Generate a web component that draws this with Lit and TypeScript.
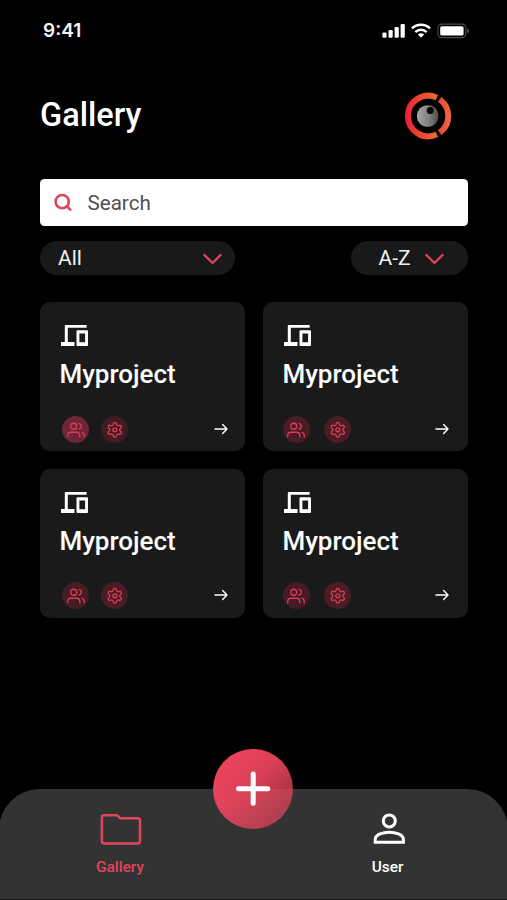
import { LitElement, html, svg, css } from "lit";
import { customElement, property } from "lit/decorators.js";
import { styleMap } from "lit/directives/style-map.js";

interface Project {
  name: string;
  teamX: number;
  arrowEnd: number;
  badgeY: number;
  teamColor: string;
  gearColor: string;
}

const projects: Project[] = [
  { name: "Myproject", teamX: 22, arrowEnd: 16.8, badgeY: 114, teamColor: "#6c2635", gearColor: "#421c24" },
  { name: "Myproject", teamX: 19.6, arrowEnd: 19.5, badgeY: 114, teamColor: "#4a1c26", gearColor: "#4a1c26" },
  { name: "Myproject", teamX: 22, arrowEnd: 16.8, badgeY: 113, teamColor: "#451b25", gearColor: "#4a1c26" },
  { name: "Myproject", teamX: 19.6, arrowEnd: 19.5, badgeY: 113, teamColor: "#451b25", gearColor: "#4a1c26" },
];

const usersIcon = svg`
  <path d="M17 21v-2a4 4 0 0 0-4-4H5a4 4 0 0 0-4 4v2"/>
  <circle cx="9" cy="7" r="4"/>
  <path d="M23 21v-2a4 4 0 0 0-3-3.87M16 3.13a4 4 0 0 1 0 7.75"/>`;

const gearIcon = svg`
  <path d="M12.22 2h-.44a2 2 0 0 0-2 2v.18a2 2 0 0 1-1 1.73l-.43.25a2 2 0 0 1-2 0l-.15-.08a2 2 0 0 0-2.73.73l-.22.38a2 2 0 0 0 .73 2.73l.15.1a2 2 0 0 1 1 1.72v.51a2 2 0 0 1-1 1.74l-.15.09a2 2 0 0 0-.73 2.73l.22.38a2 2 0 0 0 2.73.73l.15-.08a2 2 0 0 1 2 0l.43.25a2 2 0 0 1 1 1.73V20a2 2 0 0 0 2 2h.44a2 2 0 0 0 2-2v-.18a2 2 0 0 1 1-1.73l.43-.25a2 2 0 0 1 2 0l.15.08a2 2 0 0 0 2.73-.73l.22-.39a2 2 0 0 0-.73-2.73l-.15-.08a2 2 0 0 1-1-1.74v-.5a2 2 0 0 1 1-1.74l.15-.09a2 2 0 0 0 .73-2.73l-.22-.38a2 2 0 0 0-2.73-.73l-.15.08a2 2 0 0 1-2 0l-.43-.25a2 2 0 0 1-1-1.73V4a2 2 0 0 0-2-2z"/>
  <circle cx="12" cy="12" r="2.7"/>`;

@customElement("project-card")
class ProjectCard extends LitElement {
  @property({ attribute: false }) project!: Project;

  static styles = css`
    :host {
      display: flex;
      flex-direction: column;
      box-sizing: border-box;
      height: 149px;
      border-radius: 10px;
      background: #1a1a1a;
      padding-top: 23px;
    }
    .devices {
      display: block;
      width: 27px;
      height: 21px;
      margin-left: 21.4px;
    }
    .name {
      font-size: 26px;
      line-height: 30px;
      font-weight: 500;
      color: #fff;
      margin: 12.5px 0 0 19.4px;
    }
    .foot {
      display: flex;
      align-items: center;
      height: 27px;
    }
    .badges {
      display: flex;
      justify-content: space-between;
    }
    .badge {
      display: flex;
      align-items: center;
      justify-content: center;
      width: 27.4px;
      height: 27.4px;
      border-radius: 50%;
    }
    .badge svg {
      display: block;
      fill: none;
      stroke: #dc3d56;
      stroke-linecap: round;
      stroke-linejoin: round;
    }
    .arrow {
      margin: 0 0 1px auto;
      display: block;
    }
  `;

  render() {
    const p = this.project;
    return html`
      <svg class="devices" viewBox="0 0 27 21">
        <path fill="#fff" d="M3.8 1q0-1 1-1H25.6V2.8H6.8V17H13.5V21H0V17H3.8Z"/>
        <path fill="#fff" fill-rule="evenodd" d="M16.5 5.2H26Q27 5.2 27 6.2V20Q27 21 26 21H16.5Q15.5 21 15.5 20V6.2Q15.5 5.2 16.5 5.2ZM18.4 8.6V17.3H24.1V8.6Z"/>
      </svg>
      <div class="name">${p.name}</div>
      <div class="foot" style=${styleMap({
        "margin-top": `${p.badgeY - 86.5}px`,
        "padding-left": `${p.teamX}px`,
        "padding-right": `${p.arrowEnd}px`,
      })}>
        <div class="badges" style=${styleMap({ width: `${88.3 - p.teamX}px` })}>
          <span class="badge" style=${styleMap({ background: p.teamColor })}>
            <svg width="18" height="18" viewBox="0 0 24 24" stroke-width="1.7">${usersIcon}</svg>
          </span>
          <span class="badge" style=${styleMap({ background: p.gearColor })}>
            <svg width="17.6" height="17.6" viewBox="0 0 24 24" stroke-width="1.8">${gearIcon}</svg>
          </span>
        </div>
        <svg class="arrow" width="14" height="12" viewBox="0 0 14 12" fill="none" stroke="#fff" stroke-width="1.4" stroke-linecap="round" stroke-linejoin="round">
          <path d="M1 6H13M8.6 1.5 13 6 8.6 10.5"/>
        </svg>
      </div>
    `;
  }
}

@customElement("app-root")
class AppRoot extends LitElement {
  static styles = css`
    :host {
      display: flex;
      flex-direction: column;
      width: 507px;
      height: 900px;
      box-sizing: border-box;
      overflow: hidden;
      background: #000;
      color: #fff;
      font-family: Roboto, "Liberation Sans", sans-serif;
    }
    svg { display: block; }
    .status {
      display: flex;
      justify-content: space-between;
      align-items: center;
      height: 61px;
      padding: 0 38px 0 43px;
    }
    .time {
      font-family: Inter, sans-serif;
      font-weight: 600;
      font-size: 19px;
      line-height: 24px;
      color: #f4f4f4;
    }
    .head {
      display: flex;
      justify-content: space-between;
      align-items: center;
      height: 110px;
      padding: 0 55px 0 40px;
    }
    h1 {
      margin: 0;
      font-size: 32.5px;
      line-height: 40px;
      font-weight: 500;
      padding-bottom: 2px;
    }
    .content {
      display: flex;
      flex-direction: column;
      padding: 7.5px 39px 0 40px;
    }
    .search {
      display: flex;
      align-items: center;
      height: 47px;
      border-radius: 4.5px;
      background: #fff;
      color: #505050;
      font-size: 20.6px;
      padding-left: 13px;
    }
    .search span {
      margin-left: 14.5px;
      padding-top: 1px;
    }
    .filters {
      display: flex;
      justify-content: space-between;
      margin-top: 15.5px;
    }
    .pill {
      display: flex;
      align-items: center;
      justify-content: space-between;
      box-sizing: border-box;
      height: 34px;
      border-radius: 17px;
      background: #191919;
      font-size: 21px;
      color: #f2f2f2;
    }
    .pill svg { margin-top: 2px; }
    .all { width: 195px; padding: 0 12px 0 18px; }
    .sort { width: 117px; padding: 0 23px 0 27.5px; }
    .grid {
      display: grid;
      grid-template-columns: 205px 205px;
      justify-content: space-between;
      row-gap: 18px;
      margin-top: 27px;
    }
    .nav {
      position: relative;
      margin: auto -1px 0;
      height: 110px;
      border-radius: 41px 41px 0 0;
      background: #333;
      border-bottom: 1px solid #191316;
      display: flex;
      justify-content: space-between;
      padding: 0 70.5px 0 71px;
      flex: none;
    }
    .tab {
      display: flex;
      flex-direction: column;
      align-items: center;
      width: 100px;
      padding-top: 24px;
      font-size: 15.4px;
      font-weight: 500;
      line-height: 20px;
      gap: 12px;
    }
    .active { color: #e2445c; }
    .folder { margin-left: 2px; }
    .person { margin-left: 3px; }
    .fab {
      position: absolute;
      left: 214.3px;
      top: -40.5px;
      width: 80px;
      height: 80px;
      border-radius: 50%;
      background: linear-gradient(135deg, #ee445e 12%, rgba(232, 68, 93, 0.94) 45%, rgba(226, 68, 92, 0.7) 85%);
    }
  `;

  private chevron() {
    return html`<svg width="21" height="14" viewBox="0 0 21 14" fill="none" stroke="#e2435c" stroke-width="2.4" stroke-linecap="round" stroke-linejoin="round"><path d="M2.4 3 10.5 11 18.6 3"/></svg>`;
  }

  render() {
    return html`
      <div class="status">
        <div class="time">9:41</div>
        <svg width="87" height="16" viewBox="0 0 87 16">
          <g fill="#fff">
            <rect x=".4" y="9.6" width="4.2" height="5.2" rx="1.2"/>
            <rect x="6.5" y="7" width="4.2" height="7.8" rx="1.2"/>
            <rect x="12.6" y="4" width="4.2" height="10.8" rx="1.2"/>
            <rect x="18.6" y="1" width="4.2" height="13.8" rx="1.2"/>
            <path d="M39 14.8 35.8 11.6A4.8 4.8 0 0 1 42.2 11.6Z"/>
          </g>
          <g fill="none" stroke="#fff" stroke-width="2.6">
            <path d="M30 5.4A12.9 12.9 0 0 1 48 5.4"/>
            <path d="M33.4 9.1A8 8 0 0 1 44.6 9.1"/>
          </g>
          <rect x="56" y="1.1" width="27.8" height="13.5" rx="3.6" fill="none" stroke="#4c4c4c" stroke-width="1.1"/>
          <rect x="58.2" y="3.2" width="23.4" height="9.4" rx="1.7" fill="#fff"/>
          <path d="M85.2 5.6Q87 6.4 87 7.9T85.2 10.1Z" fill="#555"/>
        </svg>
      </div>
      <div class="head">
        <h1>Gallery</h1>
        <svg width="48" height="48" viewBox="0 0 48 48">
          <defs>
            <linearGradient id="ring" gradientUnits="userSpaceOnUse" x1="2" y1="0" x2="36" y2="0">
              <stop offset="0" stop-color="#ec2036"/><stop offset=".35" stop-color="#e94232"/><stop offset="1" stop-color="#f0703a"/>
            </linearGradient>
            <linearGradient id="arc" gradientUnits="userSpaceOnUse" x1="33" y1="0" x2="47" y2="0">
              <stop offset="0" stop-color="#e93c35"/><stop offset="1" stop-color="#ee6c3a"/>
            </linearGradient>
            <linearGradient id="ball"><stop offset="0" stop-color="#a5a5a5"/><stop offset=".5" stop-color="#858585"/><stop offset="1" stop-color="#4b4b4b"/></linearGradient>
          </defs>
          <g fill="none" stroke-width="6">
            <path d="M32.8 5.6A20.3 20.3 0 1 0 32.8 42.4" stroke="url(#ring)"/>
            <path d="M35.6 7.4A20.3 20.3 0 0 1 35.6 40.6" stroke="url(#arc)"/>
          </g>
          <circle cx="23.7" cy="24" r="10.8" fill="url(#ball)"/>
          <circle cx="26.2" cy="18.6" r="3.5" fill="#050505"/>
        </svg>
      </div>
      <div class="content">
        <div class="search">
          <svg width="20" height="20" viewBox="0 0 20 20" fill="none" stroke="#e2435c" stroke-width="2.6" stroke-linecap="round"><circle cx="9.2" cy="9.6" r="6.6"/><path d="M14.1 14.5 17.3 17.6"/></svg>
          <span>Search</span>
        </div>
        <div class="filters">
          <div class="pill all">All${this.chevron()}</div>
          <div class="pill sort">A-Z${this.chevron()}</div>
        </div>
        <div class="grid">
          ${projects.map((p) => html`<project-card .project=${p}></project-card>`)}
        </div>
      </div>
      <div class="nav">
        <div class="tab active">
          <svg class="folder" width="42" height="32" viewBox="0 0 42 32" fill="none" stroke="#e2445c" stroke-width="2.5" stroke-linejoin="round"><path d="M4 2.2H16.5Q17.2 2.2 17.7 2.7L20.2 5.2H37.5Q40 5.2 40 7.7V28Q40 30.4 37.5 30.4H4.3Q1.9 30.4 1.9 28V4.5Q1.9 2.2 4.3 2.2Z"/></svg>
          <span>Gallery</span>
        </div>
        <div class="tab">
          <svg class="person" width="34" height="32" viewBox="0 0 34 32" fill="none" stroke="#fff" stroke-width="3"><circle cx="17.3" cy="7.9" r="6"/><path d="M3.2 29.2V26.5C3.2 21.5 11.5 19.2 17.3 19.2S31.4 21.5 31.4 26.5V29.2Z"/></svg>
          <span>User</span>
        </div>
        <div class="fab">
          <svg width="80" height="80" viewBox="0 0 80 80" stroke="#fff" stroke-width="5" stroke-linecap="round"><path d="M25.6 39.7H54.8M40.2 25.1V54.3"/></svg>
        </div>
      </div>
    `;
  }
}
